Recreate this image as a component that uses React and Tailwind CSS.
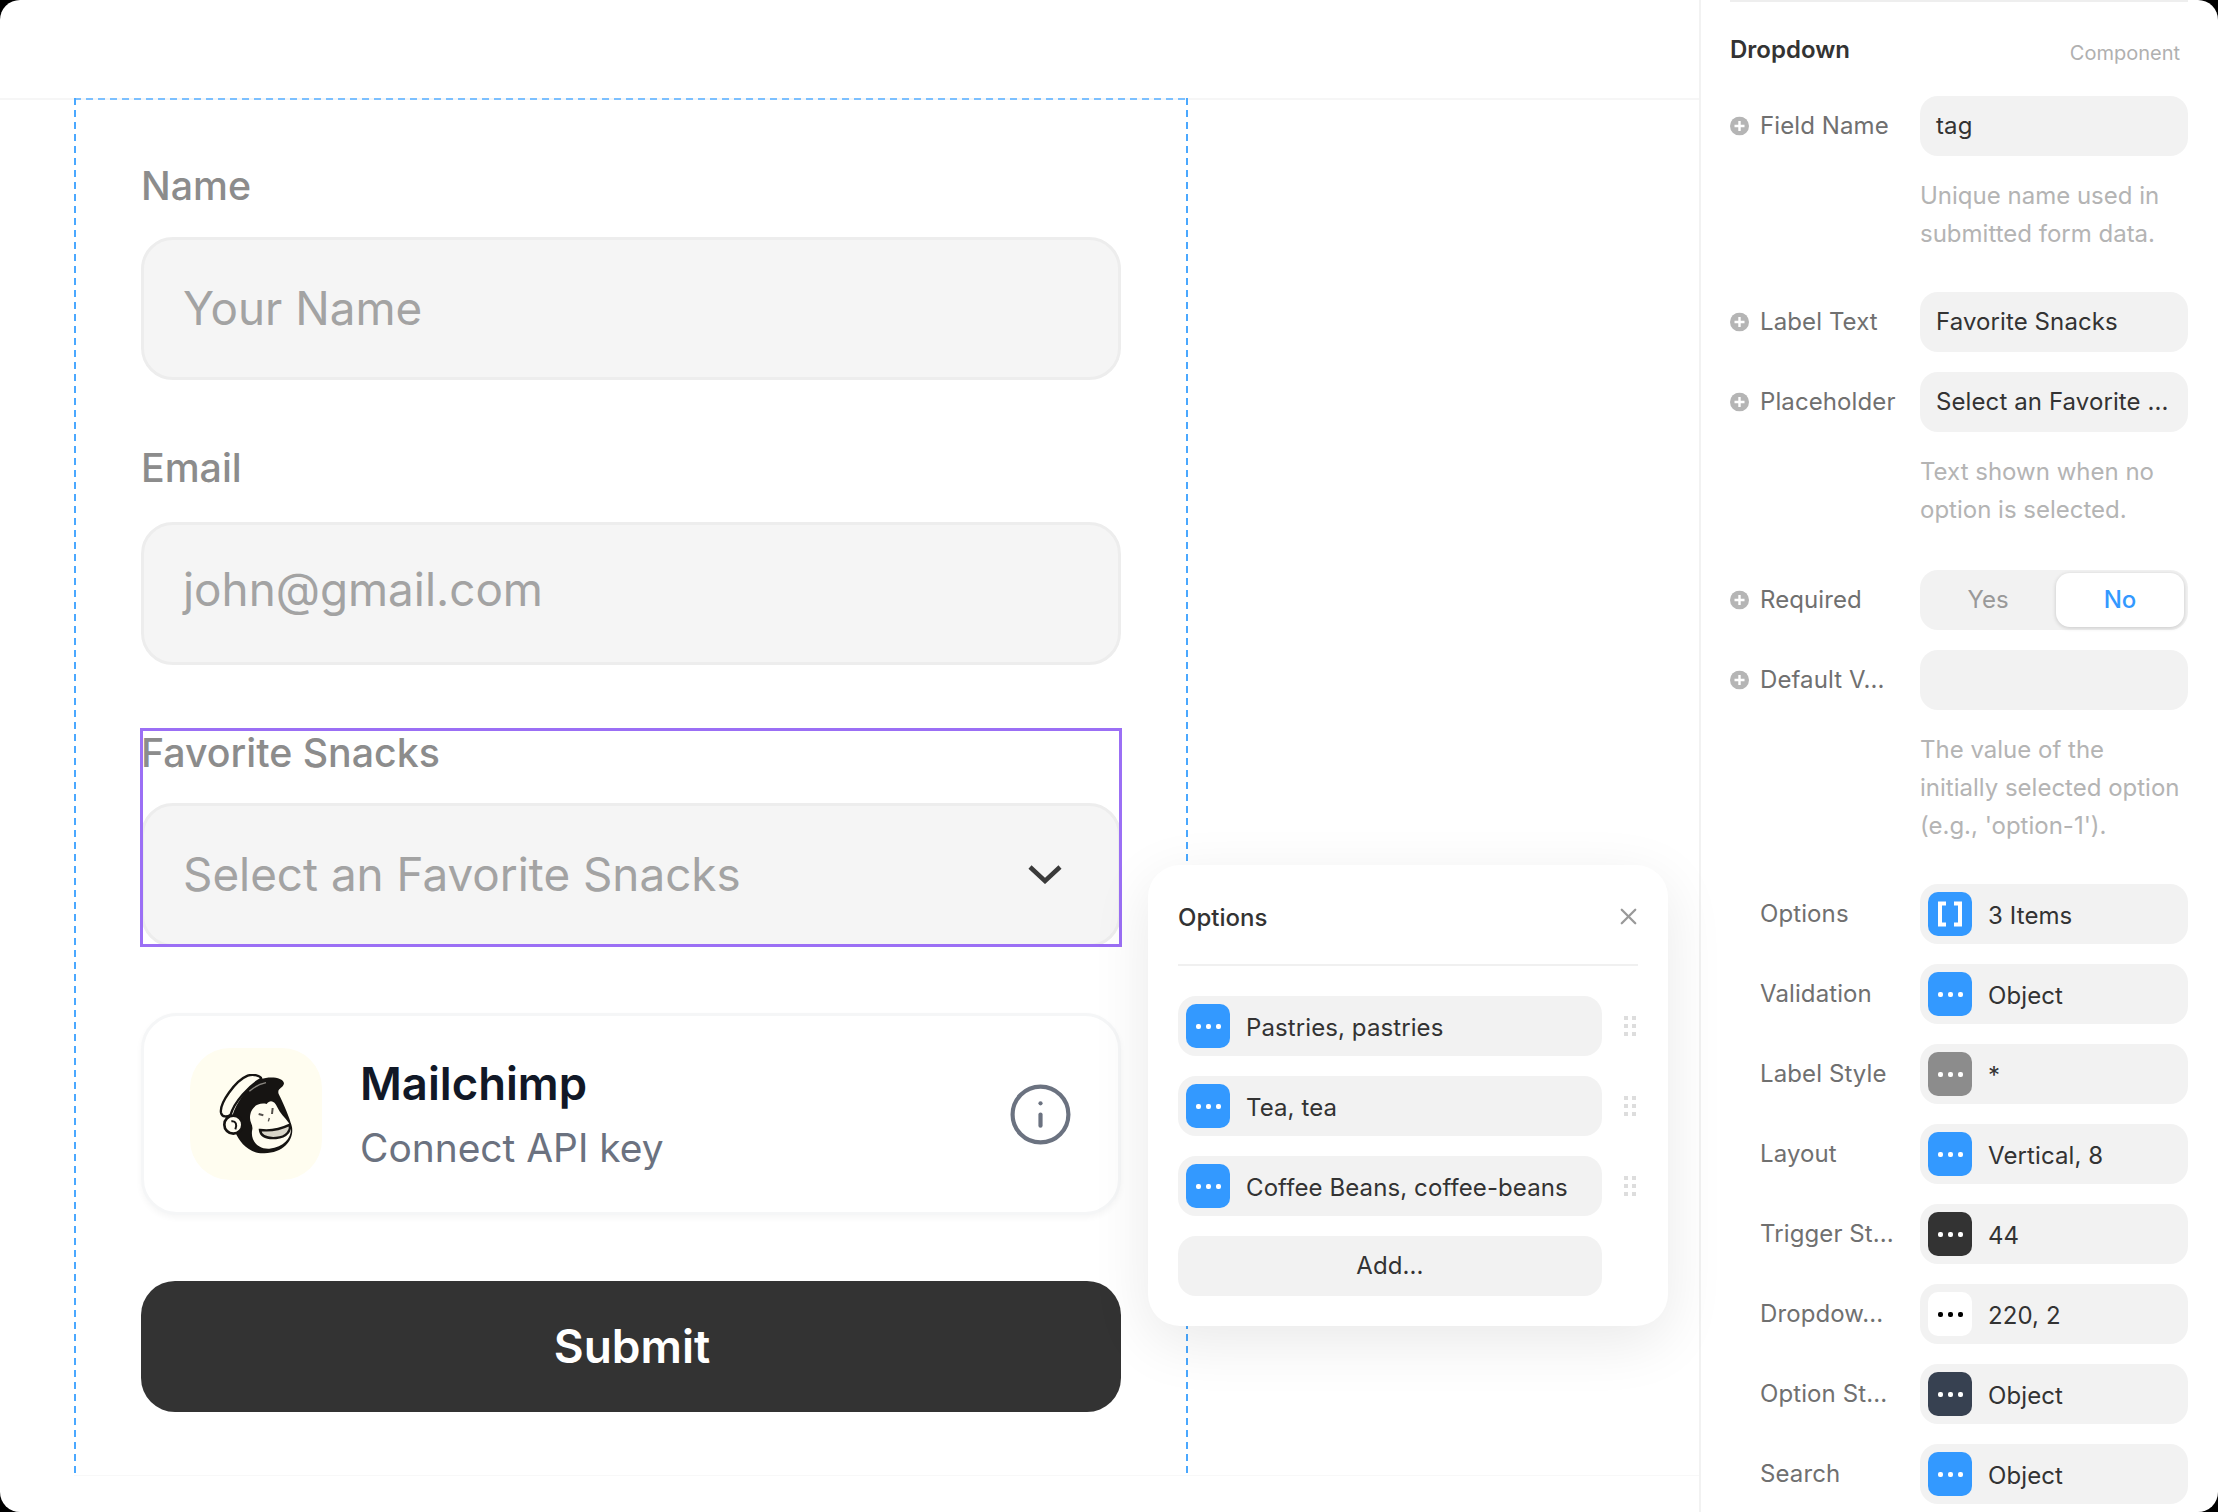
import { Info, X } from "lucide-react"

const helperClass = "pl-[190px] pt-[1px] pb-[19px] text-[24px] leading-[38px] text-[#b4b4b4]"

const properties = [
  { label: "Options", value: "3 Items", color: "bg-[#3399ff]", brackets: true },
  { label: "Validation", value: "Object", color: "bg-[#3399ff]" },
  { label: "Label Style", value: "*", color: "bg-[#8c8c8c]" },
  { label: "Layout", value: "Vertical, 8", color: "bg-[#3399ff]" },
  { label: "Trigger St...", value: "44", color: "bg-[#333333]" },
  { label: "Dropdow...", value: "220, 2", color: "bg-white", dark: true },
  { label: "Option St...", value: "Object", color: "bg-[#374151]" },
  { label: "Search", value: "Object", color: "bg-[#3399ff]" },
]

const options = ["Pastries, pastries", "Tea, tea", "Coffee Beans, coffee-beans"]

function Dots({ dark }) {
  const dot = dark ? "size-[5px] rounded-[2px] bg-black" : "size-[5px] rounded-[2px] bg-white"
  return (
    <div className="flex gap-[5px]">
      <span className={dot} />
      <span className={dot} />
      <span className={dot} />
    </div>
  )
}

function Badge({ color, dark, brackets }) {
  return (
    <div className={`flex size-[44px] shrink-0 items-center justify-center rounded-[10px] ${color}`}>
      {brackets ? (
        <svg width="26" height="26" viewBox="0 0 26 26" fill="none" stroke="white" strokeWidth="4">
          <path d="M9 2.5H3V23.5H9M17 2.5H23V23.5H17" />
        </svg>
      ) : (
        <Dots dark={dark} />
      )}
    </div>
  )
}

function PlusDot() {
  return (
    <svg width="19" height="19" viewBox="0 0 19 19" className="absolute left-0 top-1/2 -translate-y-1/2">
      <circle cx="9.5" cy="9.5" r="9.5" fill="#b5b5b5" />
      <path d="M9.5 4.5v10M4.5 9.5h10" stroke="white" strokeWidth="2.4" />
    </svg>
  )
}

function Row({ label, plus, children }) {
  return (
    <div className="flex h-[60px] items-center">
      <div className="relative w-[190px] pl-[30px] text-[24px] text-[#707070] tracking-[0.1px]">
        {plus && <PlusDot />}
        {label}
      </div>
      {children}
    </div>
  )
}

function TextField({ value }) {
  return (
    <div className="flex h-[60px] w-[268px] items-center rounded-[18px] bg-[#f2f2f2] px-4 text-[24px] text-[#333333] tracking-[0.1px] whitespace-nowrap">
      {value}
    </div>
  )
}

function ObjectField({ p }) {
  return (
    <div className="flex h-[60px] w-[268px] items-center gap-4 rounded-[18px] bg-[#f2f2f2] px-2 text-[24px] text-[#333333] tracking-[0.1px]">
      <Badge color={p.color} dark={p.dark} brackets={p.brackets} />
      <span className="pt-[3px]">{p.value}</span>
    </div>
  )
}

// Freddie drawn by hand, viewBox matches the head's pixels x3
function Freddie() {
  return (
    <svg width="74" height="80" viewBox="0 0 220 240">
      <path d="M38 128C56 72 90 36 125 16C150 6 192 10 194 28C192 44 172 42 178 60C194 92 210 128 218 160C224 195 197 236 135 238C90 240 60 205 48 175C40 155 32 145 38 128Z" fill="#161412" />
      <path d="M5 116C0 88 48 20 85 5C102 -1 124 5 126 14C90 34 44 84 34 122C24 130 8 130 5 116Z" fill="#fffdf0" stroke="#161412" strokeWidth="7" />
      <path d="M92 132C92 102 114 84 142 90C152 76 166 80 174 100C182 118 196 130 208 146C226 172 208 218 150 224C112 226 92 196 99 166C101 152 92 146 92 132Z" fill="#fffdf0" />
      <circle cx="42" cy="152" r="27" fill="#fffdf0" stroke="#161412" strokeWidth="8" />
      <path d="M36 142C50 140 54 152 48 166" fill="none" stroke="#161412" strokeWidth="6" />
      <path d="M118 120l14 4M160 102l-2 18" stroke="#55514c" strokeWidth="6" />
      <path d="M150 132l-3 10" stroke="#55514c" strokeWidth="4" />
      <path d="M122 168C150 172 185 165 212 152C214 168 205 190 170 192C140 194 124 186 122 168Z" fill="#d8d5c8" stroke="#161412" strokeWidth="7" />
      <path d="M90 52C105 38 120 30 140 26" stroke="#8a8780" strokeWidth="4" fill="none" />
    </svg>
  )
}

export default function App() {
  return (
    <div className="h-[1512px] w-[2218px] overflow-hidden bg-black [font-family:Inter,sans-serif]">
      <div className="relative flex h-full overflow-hidden rounded-[20px] bg-white">
        <main className="w-[1699px] shrink-0">
          <div className="h-[100px] border-b-2 border-[#f6f6f6]" />
          <div className="ml-[74px] h-[1376px] border-b border-[#f8f8f8]">
            <div className="relative h-full w-[1114px] px-[67px] pt-[62px]">
              <div className="absolute left-0 right-0 -top-[2px] h-[2px] bg-[repeating-linear-gradient(90deg,#7cc0ff_0,#7cc0ff_7px,transparent_7px,transparent_12px)]" />
              <div className="absolute bottom-0 left-0 -top-[2px] w-[2px] bg-[repeating-linear-gradient(180deg,#4aa8ff_0,#4aa8ff_7px,transparent_7px,transparent_12px)]" />
              <div className="absolute bottom-0 right-0 -top-[2px] w-[2px] bg-[repeating-linear-gradient(180deg,#4aa8ff_0,#4aa8ff_7px,transparent_7px,transparent_12px)]" />

              <div className="text-[39.3px] font-medium leading-[48px] text-[#8c8c8c]">Name</div>
              <div className="mt-[27px] flex h-[143px] items-center rounded-[32px] border-[3px] border-[#ededed] bg-[#f5f5f5] pl-[39px] pt-[1px] text-[45.8px] text-[#a3a3a3]">
                Your Name
              </div>

              <div className="mt-[64px] text-[39.3px] font-medium leading-[48px] text-[#8c8c8c]">Email</div>
              <div className="mt-[30px] flex h-[143px] items-center rounded-[32px] border-[3px] border-[#ededed] bg-[#f5f5f5] pb-[6px] pl-[39px] text-[45.8px] text-[#a3a3a3]">
                john@gmail.com
              </div>

              <div className="relative mt-[63px] h-[219px]">
                <div className="pt-[1px] text-[39.3px] font-medium leading-[48px] text-[#8c8c8c]">Favorite Snacks</div>
                <div className="mt-[26px] flex h-[144px] items-center justify-between rounded-[32px] border-[3px] border-[#ededed] bg-[#f5f5f5] pl-[39px] pr-[56px] text-[45.8px] text-[#a3a3a3]">
                  Select an Favorite Snacks
                  <svg width="34" height="20" viewBox="0 0 34 20" fill="none" stroke="#3a3a3a" strokeWidth="4.5" className="-mt-[2px]">
                    <path d="M2 3L17 17L32 3" />
                  </svg>
                </div>
                <div className="absolute -left-[1px] -right-[1px] bottom-0 top-0 border-[3px] border-[#9b6ff5]" />
              </div>

              <div className="mt-[66px] flex h-[202px] items-center rounded-[36px] border-[3px] border-[#f5f6f7] bg-white pl-[46px] pr-[44px] shadow-[0_3px_6px_rgba(0,0,0,0.04)]">
                <div className="flex size-[132px] items-center justify-center rounded-[40px] bg-[#fffdf0]">
                  <Freddie />
                </div>
                <div className="ml-[38px] flex-1">
                  <div className="text-[45.4px] font-semibold leading-[56px] text-[#111827]">Mailchimp</div>
                  <div className="mt-[11px] text-[38.9px] leading-[50px] text-[#6b7280]">Connect API key</div>
                </div>
                <Info size={67} strokeWidth={1.5} className="text-[#6b7280]" />
              </div>

              <button className="mt-[66px] flex h-[131px] w-full items-center justify-center rounded-[34px] bg-[#333333] pl-[2px] text-[46px] font-semibold text-white">
                Submit
              </button>
            </div>
          </div>
        </main>

        <aside className="flex-1 border-l-2 border-[#f2f2f2] pl-[29px] pr-[30px]">
          <div className="h-[2px] bg-[#eeeeee]" />
          <div className="flex h-[94px] items-center justify-between pr-[8px]">
            <span className="pt-[2px] text-[24px] font-semibold text-[#333333]">Dropdown</span>
            <span className="pt-[8px] text-[20px] text-[#b0b0b0]">Component</span>
          </div>
          <div className="flex flex-col gap-5">
            <Row label="Field Name" plus><TextField value="tag" /></Row>
            <div className={helperClass}>Unique name used in<br />submitted form data.</div>
            <Row label="Label Text" plus><TextField value="Favorite Snacks" /></Row>
            <Row label="Placeholder" plus><TextField value="Select an Favorite ..." /></Row>
            <div className={`${helperClass} !pb-[21px]`}>Text shown when no<br />option is selected.</div>
            <Row label="Required" plus>
              <div className="flex h-[60px] w-[268px] items-center rounded-[18px] bg-[#f2f2f2] pr-[4px] text-[24px]">
                <div className="flex-1 text-center text-[#999999]">Yes</div>
                <div className="flex h-[54px] w-[128px] items-center justify-center rounded-[14px] bg-white font-medium text-[#3399ff] shadow-[0_1px_4px_rgba(0,0,0,0.18)]">No</div>
              </div>
            </Row>
            <Row label="Default V..." plus><TextField value="" /></Row>
            <div className={helperClass}>The value of the<br />initially selected option<br />(e.g., 'option-1').</div>
            {properties.map((p) => (
              <Row key={p.label} label={p.label}><ObjectField p={p} /></Row>
            ))}
          </div>
        </aside>

        <div className="absolute left-[1148px] top-[865px] w-[520px] rounded-[32px] bg-white px-[30px] pb-[30px] pt-[38px] shadow-[0_16px_60px_rgba(0,0,0,0.09)]">
          <div className="flex items-center justify-between">
            <span className="text-[24px] font-medium leading-[30px] text-[#333333]">Options</span>
            <X size={27} strokeWidth={2} className="-mt-[4px] mr-[-4px] text-[#999999]" />
          </div>
          <div className="mb-[30px] mt-[31px] h-[2px] bg-[#f0f0f0]" />
          <div className="flex flex-col gap-5">
            {options.map((o) => (
              <div key={o} className="flex items-center justify-between pr-[2px]">
                <div className="flex h-[60px] w-[424px] items-center gap-4 rounded-[18px] bg-[#f2f2f2] px-2 text-[24px] text-[#333333] tracking-[0.1px]">
                  <Badge color="bg-[#3399ff]" />
                  <span className="pt-[3px]">{o}</span>
                </div>
                <div className="grid grid-cols-2 gap-[4px]">
                  {[0, 1, 2, 3, 4, 5].map((i) => (
                    <span key={i} className="size-[4px] bg-[#dddddd]" />
                  ))}
                </div>
              </div>
            ))}
            <div className="flex h-[60px] w-[424px] items-center justify-center rounded-[18px] bg-[#f2f2f2] text-[24px] text-[#333333] tracking-[0.1px]">
              Add...
            </div>
          </div>
        </div>
      </div>
    </div>
  )
}
